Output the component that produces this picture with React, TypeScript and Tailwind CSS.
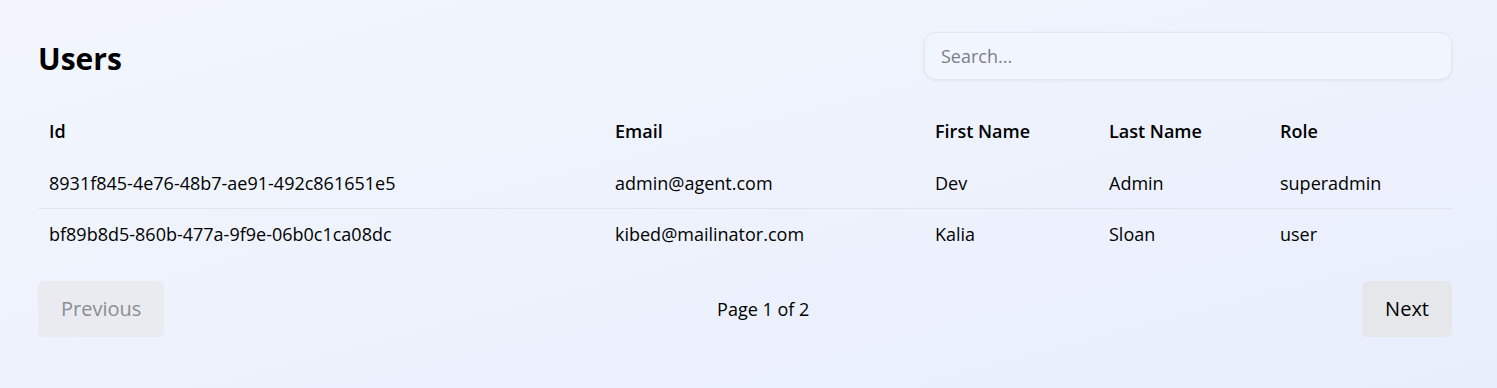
import { useState } from "react";

type User = {
  id: string;
  email: string;
  firstName: string;
  lastName: string;
  role: string;
};

const USERS: User[] = [
  {
    id: "8931f845-4e76-48b7-ae91-492c861651e5",
    email: "admin@agent.com",
    firstName: "Dev",
    lastName: "Admin",
    role: "superadmin",
  },
  {
    id: "bf89b8d5-860b-477a-9f9e-06b0c1ca08dc",
    email: "kibed@mailinator.com",
    firstName: "Kalia",
    lastName: "Sloan",
    role: "user",
  },
];

const COLUMNS = [
  { key: "id", label: "Id", width: "w-[566px]" },
  { key: "email", label: "Email", width: "w-[320px]" },
  { key: "firstName", label: "First Name", width: "w-[174px]" },
  { key: "lastName", label: "Last Name", width: "w-[171px]" },
  { key: "role", label: "Role", width: "" },
] as const;

export default function App() {
  const [query, setQuery] = useState("");
  const page = 1;
  const totalPages = 2;

  const rows = USERS.filter((user) =>
    Object.values(user).some((value) =>
      value.toLowerCase().includes(query.toLowerCase()),
    ),
  );

  return (
    <div className="min-h-screen bg-gradient-to-br from-[#f2f6fc] to-[#e9eefd] pt-8 pr-[45px] pb-12 pl-[38px] font-['Open_Sans',sans-serif] text-black">
      <div className="mb-6 flex items-center justify-between">
        <h1 className="pt-1.5 text-3xl font-bold">Users</h1>
        <input
          type="text"
          value={query}
          onChange={(event) => setQuery(event.target.value)}
          placeholder="Search..."
          className="h-12 w-[528px] rounded-xl border border-[#e4e7ee] bg-[#f1f5fd] px-4 text-lg shadow-[0_1px_3px_rgba(0,0,0,0.06)] outline-none placeholder:text-[#7b7f87]"
        />
      </div>

      <table className="w-full border-collapse text-left text-lg leading-[26px]">
        <thead>
          <tr>
            {COLUMNS.map((column) => (
              <th
                key={column.key}
                className={`${column.width} px-[11px] py-3.5 font-semibold`}
              >
                {column.label}
              </th>
            ))}
          </tr>
        </thead>
        <tbody className="divide-y divide-[#e3e5ea]">
          {rows.map((user) => (
            <tr key={user.id}>
              {COLUMNS.map((column) => (
                <td key={column.key} className="px-[11px] py-3">
                  {user[column.key]}
                </td>
              ))}
            </tr>
          ))}
        </tbody>
      </table>

      <div className="mt-[22px] flex items-center justify-between">
        <button
          type="button"
          disabled={page === 1}
          className="rounded-md bg-[#e9ebf1] px-[23px] py-3.5 text-xl text-[#8a8d93]"
        >
          Previous
        </button>
        <span className="text-lg">
          Page {page} of {totalPages}
        </span>
        <button
          type="button"
          disabled={page === totalPages}
          className="rounded-md bg-[#e5e7eb] px-[23px] py-3.5 text-xl"
        >
          Next
        </button>
      </div>
    </div>
  );
}
